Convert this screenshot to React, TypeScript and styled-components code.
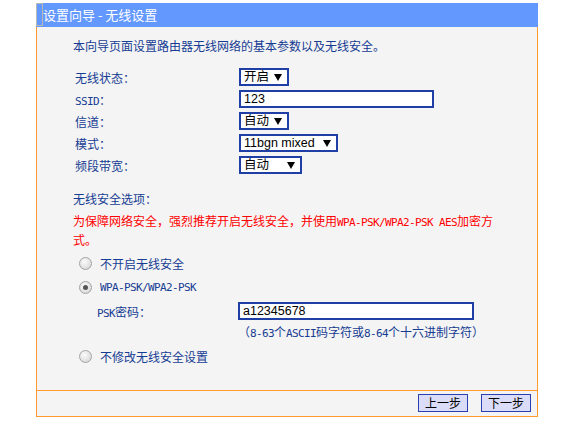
import React from "react";
import styled, { createGlobalStyle } from "styled-components";

const NAVY = "#163c93";
const ORANGE = "#ff9a2e";
const FIELD = "#1f3fa6";

const Global = createGlobalStyle`
  html, body { margin: 0; padding: 0; background: #ffffff; }
  body { font-family: "Noto Sans CJK SC", "Noto Sans", sans-serif; }
`;

const Frame = styled.div`
  margin: 3px 0 0 36px;
  width: 502px;
`;

const Header = styled.div`
  height: 24px;
  background: #6398ff;
  display: flex;
  align-items: flex-start;
  color: #ffffff;
  font-size: 13px;
`;

const Placeholder = styled.span`
  box-sizing: border-box;
  width: 7px;
  height: 23px;
  border: 1px solid #b8b8b8;
  flex: none;
`;

const Title = styled.span`
  line-height: 24px;
  white-space: pre;
`;

const Panel = styled.div`
  border: 1px solid ${ORANGE};
  border-top: none;
  background: #f4f4f4;
`;

const Content = styled.div`
  padding: 10px 0 22px 36px;
  color: ${NAVY};
  font-size: 12px;
`;

const Latin = styled.span`
  font-family: "DejaVu Sans Mono", monospace;
  font-size: 11px;
  letter-spacing: -0.62px;
  line-height: 1;
`;

const Intro = styled.div`
  line-height: 18px;
`;

const Form = styled.div`
  margin-top: 11px;
`;

const Row = styled.div`
  display: flex;
  align-items: center;
  height: 22px;
`;

const Label = styled.div<{ $w: number; $indent: number }>`
  box-sizing: border-box;
  width: ${(p) => p.$w}px;
  padding-left: ${(p) => p.$indent}px;
  flex: none;
`;

const SelectBox = styled.div<{ $w: number }>`
  box-sizing: border-box;
  width: ${(p) => p.$w}px;
  height: 18px;
  border: 2px solid ${FIELD};
  background: #ffffff;
  display: flex;
  align-items: center;
  justify-content: space-between;
  padding: 0 5px 0 3px;
  color: #000000;
  font-family: "Liberation Sans", "Noto Sans CJK SC", sans-serif;
  font-size: 12.5px;
  line-height: 14px;
`;

const Arrow = styled.svg`
  width: 8px;
  height: 7px;
  flex: none;
`;

const TextInput = styled.input<{ $w: number }>`
  box-sizing: border-box;
  width: ${(p) => p.$w}px;
  height: 18px;
  border: 2px solid ${FIELD};
  background: #ffffff;
  padding: 0 3px;
  margin: 0;
  color: #000000;
  font-family: "Liberation Sans", sans-serif;
  font-size: 12.5px;
  outline: none;
`;

const Section = styled.div`
  margin-top: 14px;
  line-height: 18px;
`;

const Warning = styled.div`
  margin-top: 3px;
  line-height: 19px;
  color: #ff0000;
`;

const Options = styled.div<{ $top: number }>`
  margin-top: ${(p) => p.$top}px;
`;

const OptionRow = styled.label`
  display: flex;
  align-items: center;
  height: 24px;
  padding-left: 6px;
`;

const Radio = styled.span<{ $checked?: boolean }>`
  box-sizing: border-box;
  width: 13px;
  height: 13px;
  border-radius: 50%;
  border: 1px solid #a4a4a4;
  background: radial-gradient(circle at 40% 35%, #fbfbfb 0%, #e4e4e4 55%, #cdcdcd 100%);
  margin-right: 8px;
  flex: none;
  display: flex;
  align-items: center;
  justify-content: center;
  &::after {
    content: "";
    display: ${(p) => (p.$checked ? "block" : "none")};
    width: 5px;
    height: 5px;
    border-radius: 50%;
    background: #555555;
  }
`;

const FieldRow = styled.div`
  display: flex;
  align-items: center;
  height: 24px;
`;

const Hint = styled.div`
  line-height: 18px;
  padding-left: 165px;
`;

const Footer = styled.div`
  border-top: 1px solid ${ORANGE};
  display: flex;
  justify-content: flex-end;
  gap: 13px;
  padding: 3px 6px 4px 0;
`;

const Button = styled.button`
  box-sizing: border-box;
  width: 50px;
  height: 18px;
  margin: 0;
  padding: 0;
  border: 1px solid #2b40b0;
  background: #dadcf8;
  color: #000000;
  font-family: "Noto Sans CJK SC", sans-serif;
  font-size: 12px;
  line-height: 16px;
`;

function Select({ w, value }: { w: number; value: string }) {
  return (
    <SelectBox $w={w}>
      <span>{value}</span>
      <Arrow viewBox="0 0 8 7">
        <path d="M0 0 H8 L4 7 Z" fill="#000" />
      </Arrow>
    </SelectBox>
  );
}

export default function App() {
  return (
    <>
      <Global />
      <Frame>
        <Header>
          <Placeholder />
          <Title>设置向导 - 无线设置</Title>
        </Header>
        <Panel>
          <Content>
            <Intro>本向导页面设置路由器无线网络的基本参数以及无线安全。</Intro>
            <Form>
              <Row>
                <Label $w={166} $indent={2}>无线状态：</Label>
                <Select w={50} value="开启" />
              </Row>
              <Row>
                <Label $w={166} $indent={2}>
                  <Latin>SSID</Latin>：
                </Label>
                <TextInput $w={195} readOnly value="123" />
              </Row>
              <Row>
                <Label $w={166} $indent={2}>信道：</Label>
                <Select w={50} value="自动" />
              </Row>
              <Row>
                <Label $w={166} $indent={2}>模式：</Label>
                <Select w={99} value="11bgn mixed" />
              </Row>
              <Row>
                <Label $w={166} $indent={2}>频段带宽：</Label>
                <Select w={63} value="自动" />
              </Row>
            </Form>
            <Section>无线安全选项：</Section>
            <Warning>
              为保障网络安全，强烈推荐开启无线安全，并使用<Latin>WPA-PSK/WPA2-PSK AES</Latin>加密方
              <br />
              式。
            </Warning>
            <Options $top={2}>
              <OptionRow>
                <Radio />
                不开启无线安全
              </OptionRow>
              <OptionRow>
                <Radio $checked />
                <Latin>WPA-PSK/WPA2-PSK</Latin>
              </OptionRow>
            </Options>
            <FieldRow>
              <Label $w={165} $indent={24}>
                <Latin>PSK</Latin>密码：
              </Label>
              <TextInput $w={236} readOnly value="a12345678" />
            </FieldRow>
            <Hint>
              （<Latin>8-63</Latin>个<Latin>ASCII</Latin>码字符或<Latin>8-64</Latin>个十六进制字符）
            </Hint>
            <Options $top={3}>
              <OptionRow>
                <Radio />
                不修改无线安全设置
              </OptionRow>
            </Options>
          </Content>
          <Footer>
            <Button>上一步</Button>
            <Button>下一步</Button>
          </Footer>
        </Panel>
      </Frame>
    </>
  );
}
